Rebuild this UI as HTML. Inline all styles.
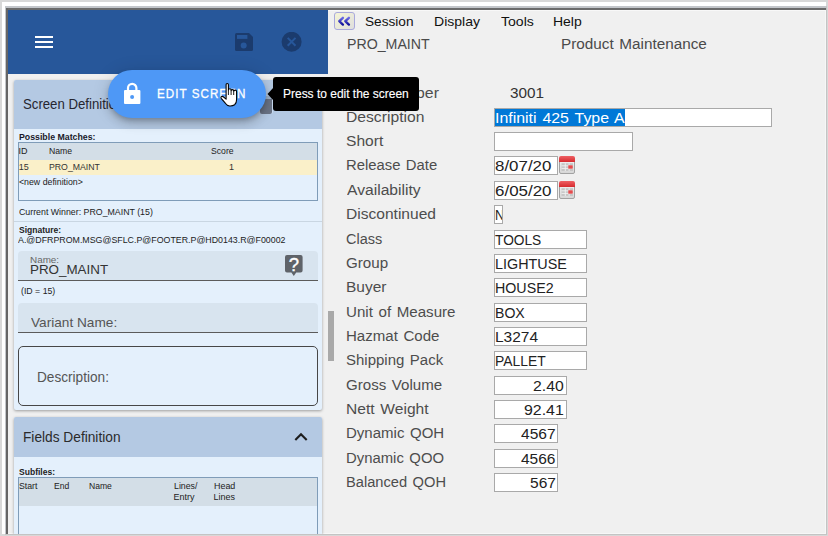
<!DOCTYPE html>
<html><head><meta charset="utf-8">
<style>
*{margin:0;padding:0;box-sizing:border-box}
html,body{width:828px;height:536px;overflow:hidden;background:#d8d8d8;font-family:"Liberation Sans",sans-serif}
.a{position:absolute}
.t{position:absolute;line-height:normal;white-space:nowrap;transform-origin:0 0;font-family:"Liberation Sans",sans-serif}
.inp{position:absolute;background:#fff;border:1px solid #a9a9a9;height:19px}
.cal{position:absolute;width:16px;height:18px}
</style></head><body>
<!-- frame -->
<div class="a" style="left:2px;top:2px;width:824px;height:532px;background:#fff"></div>
<div class="a" style="left:5px;top:6px;width:821px;height:2px;background:#c3c6ca"></div>
<div class="a" style="left:5px;top:6px;width:1px;height:528px;background:#c3c6ca"></div>
<div class="a" style="left:6px;top:8px;width:820px;height:2px;background:#6b6b6b"></div>
<div class="a" style="left:6px;top:8px;width:2px;height:526px;background:#656565"></div>
<div class="a" style="left:8px;top:10px;width:818px;height:524px;background:#f0f0f0"></div>
<div class="a" style="left:825px;top:10px;width:1px;height:524px;background:#f7f7f7"></div>
<div class="a" style="left:826px;top:6px;width:1px;height:529px;background:#c4c4c4"></div>
<div class="a" style="left:8px;top:533px;width:818px;height:1px;background:#f7f7f7"></div>
<div class="a" style="left:328px;top:10px;width:498px;height:1px;background:#f8f8f8"></div>

<!-- left header -->
<div class="a" style="left:8px;top:10px;width:320px;height:64px;background:#27579a"></div>
<div class="a" style="left:35px;top:36px;width:18px;height:2px;background:#fff"></div>
<div class="a" style="left:35px;top:41px;width:18px;height:2px;background:#fff"></div>
<div class="a" style="left:35px;top:46px;width:18px;height:2px;background:#fff"></div>
<svg class="a" style="left:235px;top:33px" width="18" height="18" viewBox="0 0 18 18">
 <path d="M1.5 0 H14 L18 4 V16.5 Q18 18 16.5 18 H1.5 Q0 18 0 16.5 V1.5 Q0 0 1.5 0 Z" fill="#1b3b6d"/>
 <rect x="2" y="2" width="10.4" height="3.9" fill="#27579a"/>
 <circle cx="8.7" cy="12.6" r="3" fill="#27579a"/>
</svg>
<svg class="a" style="left:281px;top:32px" width="21" height="21" viewBox="0 0 21 21">
 <circle cx="10.6" cy="9.8" r="10" fill="#1b3b6d"/>
 <path d="M6.7 5.9 L14.5 13.7 M14.5 5.9 L6.7 13.7" stroke="#27579a" stroke-width="2"/>
</svg>

<!-- card 1 -->
<div class="a" style="left:14px;top:80px;width:307.5px;height:330px;background:#e4f0fc;border-radius:2px;box-shadow:0 1px 3px rgba(0,0,0,.35)"></div>
<div class="a" style="left:14px;top:80px;width:307.5px;height:49px;background:#b4c9e3;border-radius:2px 2px 0 0"></div>
<div class="a" style="left:259.5px;top:96px;width:12px;height:18px;background:#6b7486;border-radius:2px;border-top:3.5px solid #9fb2c8;box-shadow:1px 0 0 #c8daf0"></div>
<!-- matches table -->
<div class="a" style="left:18px;top:142px;width:300px;height:59px;border:1px solid #7f9cb8;background:#e4f0fc"></div>
<div class="a" style="left:19px;top:143px;width:298px;height:17px;background:#d3dee7"></div>
<div class="a" style="left:19px;top:160px;width:298px;height:15px;background:#faf0c9"></div>
<div class="a" style="left:14px;top:221px;width:308px;height:1px;background:#c9d6e2"></div>
<!-- name field -->
<div class="a" style="left:18px;top:251px;width:300px;height:30px;background:#d8e4ef;border-radius:4px 4px 0 0;border-bottom:1px solid #5b5b5b"></div>
<svg class="a" style="left:285px;top:255px" width="18" height="22" viewBox="0 0 18 22">
 <path d="M2 0 H15.6 Q17.6 0 17.6 2 V15.6 Q17.6 17.6 15.6 17.6 H11.2 L8.8 21 L6.4 17.6 H2 Q0 17.6 0 15.6 V2 Q0 0 2 0 Z" fill="#5f6369"/>
 <text x="8.8" y="16" font-family="Liberation Sans" font-size="18.5" fill="#fff" stroke="#fff" stroke-width="0.35" text-anchor="middle">?</text>
</svg>
<!-- variant field -->
<div class="a" style="left:18px;top:303px;width:300px;height:30px;background:#d8e4ef;border-radius:4px 4px 0 0;border-bottom:1px solid #5b5b5b"></div>
<!-- description -->
<div class="a" style="left:18px;top:346px;width:300px;height:60px;border:1.5px solid #474747;border-radius:5px"></div>

<!-- card 2 -->
<div class="a" style="left:14px;top:416.5px;width:307.5px;height:117.5px;background:#e4f0fc;border-radius:2px 2px 0 0;box-shadow:0 1px 3px rgba(0,0,0,.35)"></div>
<div class="a" style="left:14px;top:416.5px;width:307.5px;height:40px;background:#b4c9e3;border-radius:2px 2px 0 0"></div>
<svg class="a" style="left:294px;top:432px" width="14" height="10" viewBox="0 0 14 10">
 <path d="M1.3 8 L7 2.3 L12.7 8" stroke="#1d1d1d" stroke-width="2.1" fill="none"/>
</svg>
<div class="a" style="left:18px;top:477px;width:300px;height:57px;border:1px solid #7f9cb8;border-bottom:0;background:#e4f0fc"></div>
<div class="a" style="left:19px;top:478px;width:298px;height:27.5px;background:#d3dee7"></div>

<!-- scrollbar thumb -->
<div class="a" style="left:328px;top:311px;width:6px;height:50px;background:#a9a9a9"></div>

<!-- << button -->
<svg class="a" style="left:334px;top:12px" width="21" height="18" viewBox="0 0 21 18">
 <defs><linearGradient id="bg1" x1="0" y1="0" x2="1" y2="1"><stop offset="0" stop-color="#f6f5d5"/><stop offset="1" stop-color="#dedede"/></linearGradient>
 <linearGradient id="ch" x1="0" y1="0" x2="0" y2="1"><stop offset="0" stop-color="#6a6ae6"/><stop offset="1" stop-color="#12129a"/></linearGradient></defs>
 <rect x="0.5" y="0.5" width="20" height="17" rx="2.5" fill="url(#bg1)" stroke="#a9a9dc" stroke-width="1"/>
 <path d="M8.9 5.8 L5.3 9.2 L8.9 12.6 M14.9 5.8 L11.3 9.2 L14.9 12.6" stroke="url(#ch)" stroke-width="2.4" fill="none" stroke-linecap="round" stroke-linejoin="round"/>
</svg>

<!-- inputs -->
<div class="inp" style="left:494px;top:108px;width:278px"></div>
<div class="a" style="left:495px;top:109px;width:130px;height:17px;background:#0078d7"></div>
<div class="inp" style="left:494px;top:132px;width:139px"></div>
<div class="inp" style="left:494px;top:156px;width:64px"></div>
<div class="inp" style="left:494px;top:181px;width:64px"></div>
<div class="inp" style="left:494px;top:205px;width:9px"></div>
<div class="inp" style="left:494px;top:230px;width:93px"></div>
<div class="inp" style="left:494px;top:254px;width:93px"></div>
<div class="inp" style="left:494px;top:278px;width:93px"></div>
<div class="inp" style="left:494px;top:303px;width:93px"></div>
<div class="inp" style="left:494px;top:327px;width:93px"></div>
<div class="inp" style="left:494px;top:351px;width:93px"></div>
<div class="inp" style="left:494px;top:376px;width:73px"></div>
<div class="inp" style="left:494px;top:400px;width:73px"></div>
<div class="inp" style="left:494px;top:424px;width:64px"></div>
<div class="inp" style="left:494px;top:449px;width:64px"></div>
<div class="inp" style="left:494px;top:473px;width:64px"></div>
<!-- calendars -->
<svg class="cal" style="left:559px;top:156px" width="16" height="18" viewBox="0 0 16 18">
 <defs><linearGradient id="rg0" x1="0" y1="0" x2="0" y2="1"><stop offset="0" stop-color="#ee6064"/><stop offset="1" stop-color="#d62a2e"/></linearGradient>
 <linearGradient id="gb0" x1="0" y1="0" x2="0" y2="1"><stop offset="0" stop-color="#efefef"/><stop offset="1" stop-color="#d6d6d6"/></linearGradient></defs>
 <rect x="0.5" y="4.5" width="15" height="13" rx="1.5" fill="url(#gb0)" stroke="#a2a2a2"/>
 <path d="M0 6 V2 Q0 0 2 0 H14 Q16 0 16 2 V6 Z" fill="url(#rg0)"/>
 <rect x="2.5" y="7.2" width="11.5" height="7.8" fill="#c6c6c6"/>
 <path d="M2.5 9.8 H14 M2.5 12.4 H14 M6.3 7.2 V15 M10.1 7.2 V15" stroke="#f2f2f2" stroke-width="0.9"/>
 <rect x="9.3" y="9.3" width="4.4" height="3.4" fill="#e64a4c"/>
</svg>
<svg class="cal" style="left:559px;top:180.5px" width="16" height="18" viewBox="0 0 16 18">
 <defs><linearGradient id="rg1" x1="0" y1="0" x2="0" y2="1"><stop offset="0" stop-color="#ee6064"/><stop offset="1" stop-color="#d62a2e"/></linearGradient>
 <linearGradient id="gb1" x1="0" y1="0" x2="0" y2="1"><stop offset="0" stop-color="#efefef"/><stop offset="1" stop-color="#d6d6d6"/></linearGradient></defs>
 <rect x="0.5" y="4.5" width="15" height="13" rx="1.5" fill="url(#gb1)" stroke="#a2a2a2"/>
 <path d="M0 6 V2 Q0 0 2 0 H14 Q16 0 16 2 V6 Z" fill="url(#rg1)"/>
 <rect x="2.5" y="7.2" width="11.5" height="7.8" fill="#c6c6c6"/>
 <path d="M2.5 9.8 H14 M2.5 12.4 H14 M6.3 7.2 V15 M10.1 7.2 V15" stroke="#f2f2f2" stroke-width="0.9"/>
 <rect x="9.3" y="9.3" width="4.4" height="3.4" fill="#e64a4c"/>
</svg>

<div class="t" style="left:23.20px;top:95.88px;font-size:14.5px;color:#262630;font-weight:normal;transform:scaleX(0.9098);">Screen Definition</div>
<div class="t" style="left:18.51px;top:131.95px;font-size:9px;color:#1a1a2a;font-weight:bold;transform:scaleX(0.9733);">Possible Matches:</div>
<div class="t" style="left:18.57px;top:145.55px;font-size:9px;color:#222;font-weight:normal;">ID</div>
<div class="t" style="left:49.19px;top:145.55px;font-size:9px;color:#222;font-weight:normal;transform:scaleX(0.9620);">Name</div>
<div class="t" style="left:211.01px;top:145.55px;font-size:9px;color:#222;font-weight:normal;transform:scaleX(0.9603);">Score</div>
<div class="t" style="left:18.71px;top:161.55px;font-size:9px;color:#333;font-weight:normal;">15</div>
<div class="t" style="left:49.18px;top:161.55px;font-size:9px;color:#333;font-weight:normal;transform:scaleX(0.9697);">PRO_MAINT</div>
<div class="t" style="left:229.11px;top:161.55px;font-size:9px;color:#333;font-weight:normal;">1</div>
<div class="t" style="left:19.07px;top:176.85px;font-size:9px;color:#222;font-weight:normal;transform:scaleX(0.9742);">&lt;new definition&gt;</div>
<div class="t" style="left:18.65px;top:206.10px;font-size:9.5px;color:#222;font-weight:normal;transform:scaleX(0.9264);">Current Winner: PRO_MAINT (15)</div>
<div class="t" style="left:19.45px;top:224.66px;font-size:9px;color:#222;font-weight:bold;transform:scaleX(0.9452);">Signature:</div>
<div class="t" style="left:18.48px;top:235.25px;font-size:9px;color:#222;font-weight:normal;transform:scaleX(0.9807);">A.@DFRPROM.MSG@SFLC.P@FOOTER.P@HD0143.R@F00002</div>
<div class="t" style="left:30.49px;top:254.61px;font-size:8.5px;color:#666;font-weight:normal;transform:scaleX(1.1629);">Name:</div>
<div class="t" style="left:30.20px;top:262.13px;font-size:13px;color:#333;font-weight:normal;transform:scaleX(1.0298);">PRO_MAINT</div>
<div class="t" style="left:20.56px;top:286.06px;font-size:9px;color:#222;font-weight:normal;transform:scaleX(0.9723);">(ID = 15)</div>
<div class="t" style="left:31.04px;top:314.78px;font-size:13.5px;color:#555;font-weight:normal;transform:scaleX(1.0108);">Variant Name:</div>
<div class="t" style="left:36.88px;top:368.63px;font-size:14px;color:#555;font-weight:normal;transform:scaleX(0.9736);">Description:</div>
<div class="t" style="left:22.58px;top:428.78px;font-size:14.5px;color:#2b2b2b;font-weight:normal;transform:scaleX(0.9453);">Fields Definition</div>
<div class="t" style="left:19.25px;top:466.75px;font-size:9px;color:#222;font-weight:bold;transform:scaleX(0.9491);">Subfiles:</div>
<div class="t" style="left:19.10px;top:480.66px;font-size:9px;color:#222;font-weight:normal;transform:scaleX(0.9713);">Start</div>
<div class="t" style="left:54.20px;top:480.66px;font-size:9px;color:#222;font-weight:normal;transform:scaleX(0.9527);">End</div>
<div class="t" style="left:89.00px;top:480.66px;font-size:9px;color:#222;font-weight:normal;transform:scaleX(0.9532);">Name</div>
<div class="t" style="left:174.08px;top:480.66px;font-size:9px;color:#222;font-weight:normal;transform:scaleX(0.9752);">Lines/</div>
<div class="t" style="left:173.56px;top:491.56px;font-size:9px;color:#222;font-weight:normal;">Entry</div>
<div class="t" style="left:213.97px;top:480.66px;font-size:9px;color:#222;font-weight:normal;transform:scaleX(0.9902);">Head</div>
<div class="t" style="left:213.46px;top:491.56px;font-size:9px;color:#222;font-weight:normal;">Lines</div>
<div class="t" style="left:365.48px;top:14.23px;font-size:13px;color:#111;font-weight:normal;transform:scaleX(1.0488);">Session</div>
<div class="t" style="left:433.75px;top:14.23px;font-size:13px;color:#111;font-weight:normal;transform:scaleX(1.0787);">Display</div>
<div class="t" style="left:500.68px;top:14.23px;font-size:13px;color:#111;font-weight:normal;transform:scaleX(1.0816);">Tools</div>
<div class="t" style="left:552.95px;top:14.23px;font-size:13px;color:#111;font-weight:normal;transform:scaleX(1.0747);">Help</div>
<div class="t" style="left:346.54px;top:36.23px;font-size:14px;color:#4a4a4a;font-weight:normal;transform:scaleX(1.0124);">PRO_MAINT</div>
<div class="t" style="left:561.45px;top:36.13px;font-size:14px;color:#4a4a4a;font-weight:normal;word-spacing:1.3px;transform:scaleX(1.0915);">Product Maintenance</div>
<div class="t" style="left:345.54px;top:85.43px;font-size:14px;color:#4d4d4d;font-weight:normal;word-spacing:1.3px;transform:scaleX(1.1303);">Item Number</div>
<div class="t" style="left:345.71px;top:109.43px;font-size:14px;color:#4d4d4d;font-weight:normal;transform:scaleX(1.1196);">Description</div>
<div class="t" style="left:345.89px;top:133.43px;font-size:14px;color:#4d4d4d;font-weight:normal;transform:scaleX(1.1123);">Short</div>
<div class="t" style="left:345.78px;top:157.43px;font-size:14px;color:#4d4d4d;font-weight:normal;word-spacing:1.3px;transform:scaleX(1.0586);">Release Date</div>
<div class="t" style="left:346.57px;top:182.43px;font-size:14px;color:#4d4d4d;font-weight:normal;transform:scaleX(1.1180);">Availability</div>
<div class="t" style="left:345.72px;top:206.43px;font-size:14px;color:#4d4d4d;font-weight:normal;transform:scaleX(1.1117);">Discontinued</div>
<div class="t" style="left:345.87px;top:231.43px;font-size:14px;color:#4d4d4d;font-weight:normal;transform:scaleX(1.0328);">Class</div>
<div class="t" style="left:345.84px;top:255.43px;font-size:14px;color:#4d4d4d;font-weight:normal;transform:scaleX(1.0819);">Group</div>
<div class="t" style="left:345.73px;top:279.43px;font-size:14px;color:#4d4d4d;font-weight:normal;transform:scaleX(1.1054);">Buyer</div>
<div class="t" style="left:345.83px;top:304.43px;font-size:14px;color:#4d4d4d;font-weight:normal;word-spacing:1.3px;transform:scaleX(1.0800);">Unit of Measure</div>
<div class="t" style="left:345.77px;top:328.43px;font-size:14px;color:#4d4d4d;font-weight:normal;word-spacing:1.3px;transform:scaleX(1.0749);">Hazmat Code</div>
<div class="t" style="left:345.92px;top:352.43px;font-size:14px;color:#4d4d4d;font-weight:normal;word-spacing:1.3px;transform:scaleX(1.0700);">Shipping Pack</div>
<div class="t" style="left:346.24px;top:377.43px;font-size:14px;color:#4d4d4d;font-weight:normal;word-spacing:1.3px;transform:scaleX(1.0774);">Gross Volume</div>
<div class="t" style="left:345.72px;top:401.43px;font-size:14px;color:#4d4d4d;font-weight:normal;word-spacing:1.3px;transform:scaleX(1.1133);">Nett Weight</div>
<div class="t" style="left:345.77px;top:425.43px;font-size:14px;color:#4d4d4d;font-weight:normal;word-spacing:1.3px;transform:scaleX(1.0723);">Dynamic QOH</div>
<div class="t" style="left:345.78px;top:450.43px;font-size:14px;color:#4d4d4d;font-weight:normal;word-spacing:1.3px;transform:scaleX(1.0619);">Dynamic QOO</div>
<div class="t" style="left:345.80px;top:474.43px;font-size:14px;color:#4d4d4d;font-weight:normal;word-spacing:1.3px;transform:scaleX(1.0476);">Balanced QOH</div>
<div class="t" style="left:509.62px;top:84.73px;font-size:14px;color:#333;font-weight:normal;transform:scaleX(1.0926);">3001</div>
<div class="t" style="left:495.33px;top:110.33px;font-size:14px;color:#fff;font-weight:normal;word-spacing:1.3px;transform:scaleX(1.1355);">Infiniti 425 Type A</div>
<div class="t" style="left:495.40px;top:158.33px;font-size:14px;color:#222;font-weight:normal;transform:scaleX(1.2073);">8/07/20</div>
<div class="t" style="left:495.40px;top:183.33px;font-size:14px;color:#222;font-weight:normal;transform:scaleX(1.2101);">6/05/20</div>
<div class="t" style="left:495.40px;top:207.33px;font-size:14px;color:#222;font-weight:normal;transform:scaleX(0.9207);">N</div>
<div class="t" style="left:495.40px;top:232.33px;font-size:14px;color:#222;font-weight:normal;transform:scaleX(0.9796);">TOOLS</div>
<div class="t" style="left:495.40px;top:256.33px;font-size:14px;color:#222;font-weight:normal;transform:scaleX(1.0254);">LIGHTUSE</div>
<div class="t" style="left:495.40px;top:280.33px;font-size:14px;color:#222;font-weight:normal;transform:scaleX(1.0176);">HOUSE2</div>
<div class="t" style="left:495.40px;top:305.33px;font-size:14px;color:#222;font-weight:normal;transform:scaleX(1.0063);">BOX</div>
<div class="t" style="left:495.40px;top:329.33px;font-size:14px;color:#222;font-weight:normal;transform:scaleX(1.1051);">L3274</div>
<div class="t" style="left:495.40px;top:353.33px;font-size:14px;color:#222;font-weight:normal;transform:scaleX(0.9914);">PALLET</div>
<div class="t" style="left:533.21px;top:378.33px;font-size:14px;color:#222;font-weight:normal;transform:scaleX(1.1271);">2.40</div>
<div class="t" style="left:524.25px;top:402.33px;font-size:14px;color:#222;font-weight:normal;transform:scaleX(1.1367);">92.41</div>
<div class="t" style="left:521.04px;top:426.33px;font-size:14px;color:#222;font-weight:normal;transform:scaleX(1.1089);">4567</div>
<div class="t" style="left:521.04px;top:451.33px;font-size:14px;color:#222;font-weight:normal;transform:scaleX(1.1057);">4566</div>
<div class="t" style="left:529.68px;top:475.33px;font-size:14px;color:#222;font-weight:normal;transform:scaleX(1.1089);">567</div>

<!-- clip for discontinued N -->
<div class="a" style="left:502px;top:205px;width:20px;height:19px;background:#f0f0f0;border-left:1px solid #a9a9a9"></div>

<!-- edit screen button -->
<div class="a" style="left:108px;top:70px;width:158px;height:48px;border-radius:24px;background:#4e98f6;box-shadow:0 3px 5px -1px rgba(0,0,0,.2),0 6px 10px 0 rgba(0,0,0,.14),0 1px 18px 0 rgba(0,0,0,.12)"></div>
<svg class="a" style="left:123px;top:82px" width="19" height="23" viewBox="0 0 19 23">
 <path d="M5 8.5 V6.1 A4.2 4.2 0 0 1 13.4 6.1 V8.5" stroke="#fff" stroke-width="2.2" fill="none"/>
 <rect x="1" y="7.9" width="16.4" height="14" rx="1" fill="#fff"/>
 <circle cx="9.1" cy="14.9" r="2" fill="#4e98f6"/>
</svg>
<!-- tooltip -->
<div class="a" style="left:273px;top:77px;width:146px;height:34px;background:#000;border-radius:3px"></div>
<svg class="a" style="left:266px;top:86px" width="8" height="16" viewBox="0 0 8 16"><path d="M8 1 L1.5 8 L8 15 Z" fill="#000"/></svg>

<div class="t z" style="left:283.22px;top:87.29px;font-size:12.5px;color:#fff;font-weight:normal;transform:scaleX(0.9577);-webkit-text-stroke:0.15px #fff;">Press to edit the screen</div>
<div class="t z" style="left:156.55px;top:86.69px;font-size:12.5px;color:#fff;font-weight:normal;letter-spacing:1.1px;transform:scaleX(0.9312);-webkit-text-stroke:0.3px #fff;">EDIT SCREEN</div>

<!-- hand cursor -->
<svg class="a" style="left:219px;top:82px" width="20" height="26" viewBox="0 0 20 26">
 <path d="M7.1 2.6 Q7.1 1.5 8.2 1.5 Q9.4 1.5 9.4 2.6 V8 Q9.6 6.8 10.9 6.8 Q12.1 6.8 12.1 8 V8.6 Q12.4 7.6 13.5 7.6 Q14.7 7.6 14.7 8.8 V9.3 Q15 8.1 16.2 8.1 Q17.6 8.1 17.6 9.5 V17.5 Q17.6 21.2 15.6 22.8 Q13.6 24.2 10.6 24 Q8 23.6 6.3 21.2 L2.2 16.3 Q1.5 15.2 2.3 14.6 Q3.4 13.9 4.6 15 L7.1 17.2 Z" fill="#fff" stroke="#000" stroke-width="1.1" stroke-linejoin="round"/>
 <path d="M9.4 8 V13 M12.1 8.6 V13 M14.7 9.3 V13" stroke="#000" stroke-width="0.9"/>
</svg>
<div class="a" style="left:0;top:534px;width:828px;height:2px;background:#d8d8d8"></div>
<div class="a" style="left:5px;top:534px;width:822px;height:1px;background:#c4c4c4"></div>
</body></html>
